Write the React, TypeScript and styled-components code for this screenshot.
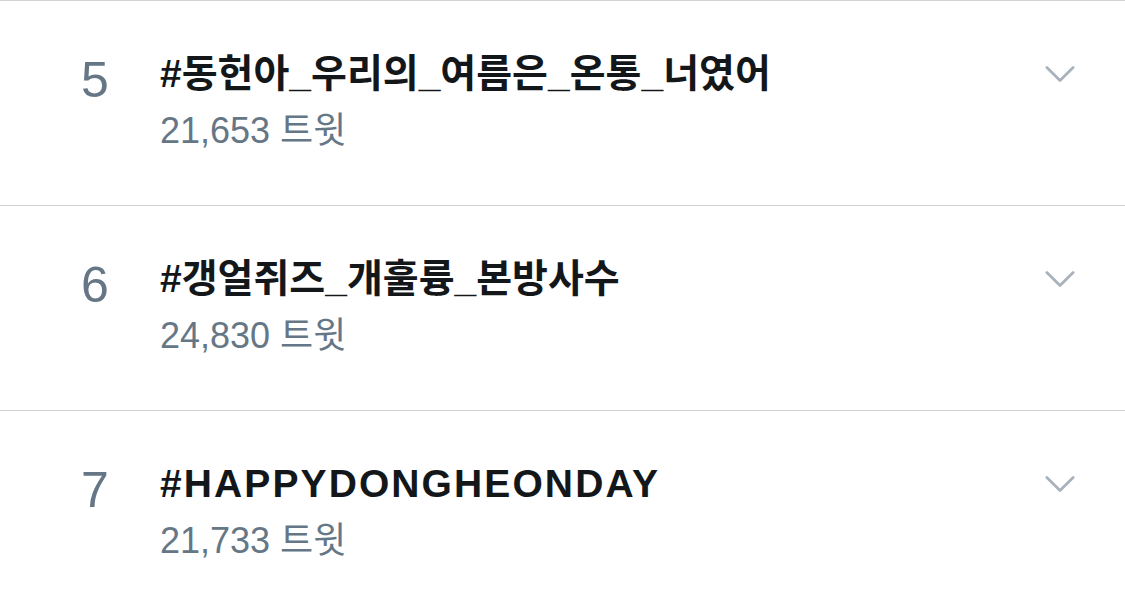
import React from "react";
import styled, { createGlobalStyle } from "styled-components";

const GlobalStyle = createGlobalStyle`
  html, body {
    margin: 0;
    padding: 0;
    background: #ffffff;
  }
  body {
    font-family: "Liberation Sans", "Noto Sans CJK KR", sans-serif;
    -webkit-font-smoothing: antialiased;
  }
`;

const List = styled.ul`
  list-style: none;
  margin: 0;
  padding: 0;
  border-top: 1px solid #d3d3d6;
  overflow: hidden;
`;

const Row = styled.li`
  display: grid;
  grid-template-columns: 30px 1fr auto;
  column-gap: 50px;
  height: 204px;
  padding: 0 50px 0 80px;
  border-bottom: 1px solid #d3d3d6;
  box-sizing: content-box;
`;

const Rank = styled.div`
  margin-top: 49px;
  font-family: "Liberation Sans", sans-serif;
  font-size: 50px;
  line-height: 60px;
  height: 60px;
  text-align: center;
  color: #657786;
`;

const Body = styled.div`
  display: flex;
  flex-direction: column;
  padding-top: 51px;
  min-width: 0;
`;

const Title = styled.div<{ $tracking: number }>`
  font-family: "Liberation Sans", "Noto Sans CJK KR", sans-serif;
  font-weight: 700;
  font-size: 39px;
  line-height: 44px;
  letter-spacing: ${(p) => p.$tracking}px;
  color: #14171a;
  white-space: nowrap;
`;

const Count = styled.div`
  margin-top: 13px;
  font-family: "Liberation Sans", "Noto Sans CJK KR", sans-serif;
  font-size: 36px;
  line-height: 44px;
  color: #657786;
  white-space: nowrap;
`;

const Caret = styled.button`
  align-self: start;
  margin-top: 60px;
  width: 30px;
  height: 26px;
  padding: 0;
  border: 0;
  background: none;
  display: flex;
  align-items: center;
  justify-content: center;
  color: #a9b3bd;
`;

const trends = [
  { rank: 5, title: "#동헌아_우리의_여름은_온통_너였어", count: "21,653 트윗", tracking: 0 },
  { rank: 6, title: "#갱얼쥐즈_개훌륭_본방사수", count: "24,830 트윗", tracking: 0 },
  { rank: 7, title: "#HAPPYDONGHEONDAY", count: "21,733 트윗", tracking: 2.1 },
];

const Chevron = () => (
  <svg width="32" height="18" viewBox="0 0 32 18" fill="none">
    <path
      d="M2 2 L16 16 L30 2"
      stroke="currentColor"
      strokeWidth="3"
      strokeLinecap="round"
      strokeLinejoin="round"
    />
  </svg>
);

export default function App() {
  return (
    <>
      <GlobalStyle />
      <List>
        {trends.map((t) => (
          <Row key={t.rank}>
            <Rank>{t.rank}</Rank>
            <Body>
              <Title $tracking={t.tracking}>{t.title}</Title>
              <Count>{t.count}</Count>
            </Body>
            <Caret aria-label="more">
              <Chevron />
            </Caret>
          </Row>
        ))}
      </List>
    </>
  );
}
